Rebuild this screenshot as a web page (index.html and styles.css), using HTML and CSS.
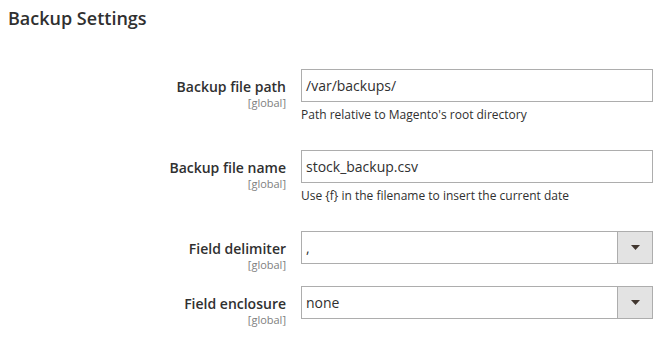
FILE: index.html
```html
<!DOCTYPE html>
<html lang="en">
<head>
<meta charset="utf-8">
<title>Backup Settings</title>
<link rel="stylesheet" href="styles.css">
</head>
<body>
<div class="page">
  <h2 class="section-title">Backup Settings</h2>
  <div class="fields">
    <div class="row">
      <div class="label-col">
        <div class="label">Backup file path</div>
        <div class="scope">[global]</div>
      </div>
      <div class="control">
        <div class="input">/var/backups/</div>
        <div class="note">Path relative to Magento's root directory</div>
      </div>
    </div>
    <div class="row">
      <div class="label-col">
        <div class="label">Backup file name</div>
        <div class="scope">[global]</div>
      </div>
      <div class="control">
        <div class="input">stock_backup.csv</div>
        <div class="note">Use {f} in the filename to insert the current date</div>
      </div>
    </div>
    <div class="row">
      <div class="label-col">
        <div class="label">Field delimiter</div>
        <div class="scope">[global]</div>
      </div>
      <div class="control">
        <div class="select">
          <span class="select-value">,</span>
          <span class="select-btn"><svg width="9" height="5" viewBox="0 0 9 5"><path d="M0 0H9L4.5 5Z" fill="#41362f"/></svg></span>
        </div>
      </div>
    </div>
    <div class="row">
      <div class="label-col">
        <div class="label">Field enclosure</div>
        <div class="scope">[global]</div>
      </div>
      <div class="control">
        <div class="select">
          <span class="select-value">none</span>
          <span class="select-btn"><svg width="9" height="5" viewBox="0 0 9 5"><path d="M0 0H9L4.5 5Z" fill="#41362f"/></svg></span>
        </div>
      </div>
    </div>
  </div>
</div>
</body>
</html>
```
FILE: styles.css
```css
* { box-sizing: border-box; }
html, body { margin: 0; padding: 0; background: #fff; }
body {
  font-family: "Open Sans", "Liberation Sans", sans-serif;
  color: #303030;
}
.page { padding: 0 12px 0 8px; }
.section-title {
  margin: 0;
  padding-top: 6px;
  font-size: 18px;
  line-height: 24px;
  font-weight: 600;
  color: #303030;
}
.fields { padding-top: 39px; }
.row {
  display: grid;
  grid-template-columns: 278px 352px;
  column-gap: 15px;
  margin-bottom: 15px;
}
.label-col {
  text-align: right;
  padding-top: 9px;
}
.label {
  font-size: 14px;
  line-height: 18px;
  font-weight: 600;
  color: #303030;
}
.scope {
  font-size: 11px;
  line-height: 13px;
  color: #808080;
}
.control { display: flex; flex-direction: column; }
.input, .select {
  height: 33px;
  border: 1px solid #adadad;
  background: #fff;
  font-size: 14px;
  color: #303030;
}
.input {
  padding: 0 4px;
  line-height: 31px;
}
.note {
  font-size: 12px;
  line-height: 16px;
  padding-top: 5px;
  padding-bottom: 12px;
  color: #303030;
}
.select { display: flex; }
.select-value {
  flex: 1;
  padding: 0 4px;
  line-height: 31px;
}
.select-btn {
  width: 35px;
  background: #e3e3e3;
  border-left: 1px solid #adadad;
  display: flex;
  align-items: center;
  justify-content: center;
}
.select-btn svg { display: block; }
```
